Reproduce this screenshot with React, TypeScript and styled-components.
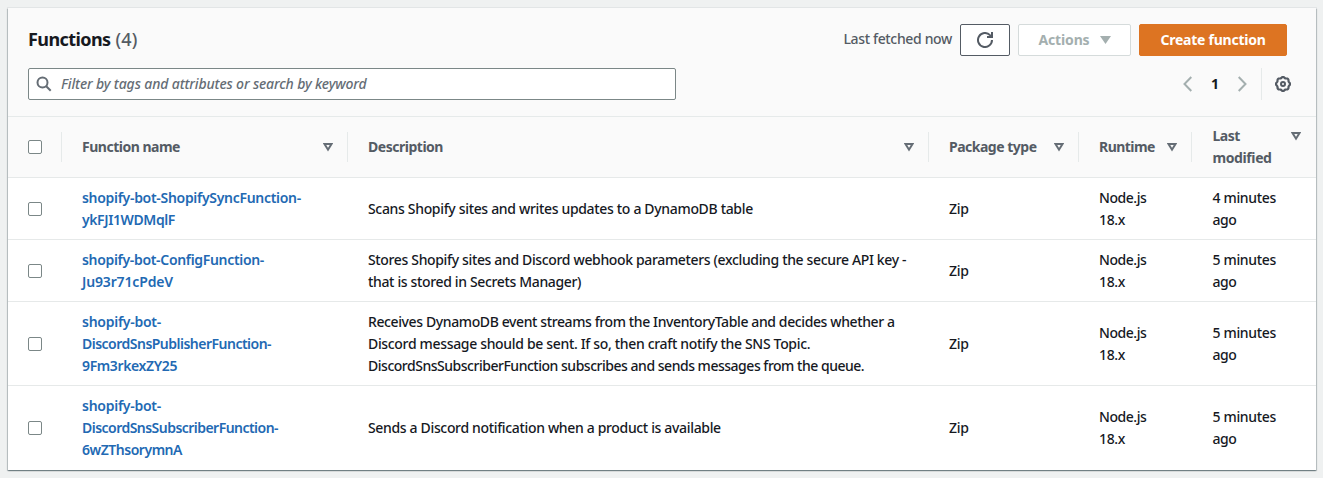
import React from "react";
import styled, { createGlobalStyle } from "styled-components";

const GlobalStyle = createGlobalStyle`
  *, *::before, *::after { box-sizing: border-box; }
  body {
    margin: 0;
    background: #eff1f1;
    color: #16191f;
    font-family: "Noto Sans", "Open Sans", sans-serif;
    font-size: 14px;
    line-height: 22px;
  }
`;

const Page = styled.main`
  height: 478px;
  padding: 8px 7px 8px 8px;
  overflow: hidden;
`;

const Panel = styled.section`
  height: 462px;
  background: #fff;
  box-shadow: 0 0 0 1px rgba(0, 28, 36, 0.05), 0 1px 1px 0 rgba(0, 28, 36, 0.3), 1px 1px 1px 0 rgba(0, 28, 36, 0.15),
    -1px 1px 1px 0 rgba(0, 28, 36, 0.15);
`;

const PanelHeader = styled.header`
  height: 109px;
  padding: 16px 20px 0;
  background: #fafafa;
  border-bottom: 1px solid #e6eaea;
`;

const HeaderRow = styled.div`
  display: flex;
  align-items: center;
  justify-content: space-between;
  height: 32px;
  margin-bottom: 12px;
`;

const Text = styled.span<{ $spacing?: number }>`
  display: block;
  white-space: nowrap;
  letter-spacing: ${(p) => p.$spacing ?? -0.23}px;
`;

const Title = styled.h2`
  display: flex;
  gap: 5px;
  margin: 0 0 2px;
  font-size: 18px;
  font-weight: 700;
`;

const Counter = styled.span`
  color: #545b64;
  font-weight: 500;
  letter-spacing: 0.1px;
`;

const Actions = styled.div`
  display: flex;
  align-items: center;
  gap: 8px;
  margin-right: 9px;
`;

const FetchedNote = styled.div`
  margin-bottom: 2px;
  color: #545b64;
  font-weight: 500;
`;

const Button = styled.button<{ $variant?: "normal" | "disabled" | "primary"; $width: number }>`
  display: flex;
  align-items: center;
  justify-content: center;
  gap: 10px;
  width: ${(p) => p.$width}px;
  height: 32px;
  padding: 0;
  border: 1px solid
    ${(p) => (p.$variant === "primary" ? "#dd7422" : p.$variant === "disabled" ? "#d5dbdb" : "#545b64")};
  border-radius: 2px;
  background: ${(p) => (p.$variant === "primary" ? "#dd7422" : "#fff")};
  color: ${(p) => (p.$variant === "primary" ? "#fff" : p.$variant === "disabled" ? "#a4afaf" : "#545b64")};
  font: 700 14px/22px "Noto Sans", sans-serif;
`;

const SearchField = styled.div`
  display: flex;
  align-items: center;
  gap: 9px;
  width: 648px;
  height: 32px;
  padding: 0 7px;
  border: 1px solid #7b8787;
  border-radius: 2px;
  background: #fff;
  color: #656d75;
  font-style: italic;
  font-weight: 500;
`;

const Pagination = styled.nav`
  display: flex;
  align-items: center;
  height: 32px;
  margin-right: 5px;
  color: #a4afaf;
`;

const PageNumber = styled.span`
  width: 46px;
  color: #16191f;
  font-weight: 700;
  text-align: center;
`;

const Preferences = styled.div`
  display: flex;
  align-items: center;
  height: 32px;
  margin-left: 14px;
  padding-left: 13px;
  border-left: 1px solid #e6eaea;
  color: #545b64;
`;

const Row = styled.div<{ $head?: boolean }>`
  display: grid;
  grid-template-columns: 54px 286px 581px 150px 113px 124px;
  align-items: center;
  padding: ${(p) => (p.$head ? 8 : 9)}px 0 8px;
  border-bottom: 1px solid #e6e9e9;
  background: ${(p) => (p.$head ? "#fafafa" : "#fff")};
  color: ${(p) => (p.$head ? "#545b64" : "#16191f")};
  font-weight: ${(p) => (p.$head ? 700 : 500)};

  &:last-child {
    border-bottom-color: transparent;
  }
`;

const Cell = styled.div`
  padding-left: 20px;

  &:last-child {
    padding-left: 20.5px;
  }
`;

const HeadCell = styled.div<{ $last?: boolean }>`
  display: flex;
  align-items: center;
  justify-content: space-between;
  min-height: 30px;
  padding: ${(p) => (p.$last ? "0 15px 0 20.5px" : "0 14px 0 20px")};
  border-right: ${(p) => (p.$last ? "0" : "1px solid #e6eaea")};

  & > svg {
    align-self: ${(p) => (p.$last ? "flex-start" : "center")};
    margin-top: ${(p) => (p.$last ? 7 : 1)}px;
  }
`;

const FunctionLink = styled.a`
  color: #2269b3;
  font-weight: 600;
`;

const Checkbox = styled.input.attrs({ type: "checkbox" })`
  appearance: none;
  display: block;
  width: 14px;
  height: 14px;
  margin: 0;
  border: 1px solid #7b8787;
  border-radius: 2px;
  background: #fff;
`;

const SortIcon = () => (
  <svg width="10" height="9" viewBox="0 0 10 9" fill="none" stroke="#656d75" strokeWidth="2">
    <path d="M1.5 1h7L5 6.700z" />
  </svg>
);

const SearchIcon = () => (
  <svg width="16" height="16" viewBox="0 0 16 16" fill="none" stroke="#656d75" strokeWidth="2">
    <circle cx="6.500" cy="6.500" r="5" />
    <path d="m10 10 4.700 4.700" />
  </svg>
);

const RefreshIcon = () => (
  <svg width="16" height="16" viewBox="0 0 16 16" fill="none" stroke="currentColor" strokeWidth="2">
    <path d="M15 8a7 7 0 1 1-2-4.900L15 5" />
    <path d="M10 5h5V0" />
  </svg>
);

const ChevronIcon = ({ d }: { d: string }) => (
  <svg width="9" height="16" viewBox="0 0 9 16" fill="none" stroke="currentColor" strokeWidth="2">
    <path d={d} />
  </svg>
);

const gearPath = Array.from({ length: 64 }, (_, i) => {
  const a = (i / 64) * Math.PI * 2;
  const r = 6.6 + 0.5 * Math.cos(8 * a);
  return `${i ? "L" : "M"}${(8 + r * Math.cos(a)).toFixed(2)} ${(8 + r * Math.sin(a)).toFixed(2)}`;
}).join("");

const GearIcon = () => (
  <svg width="16" height="16" viewBox="0 0 16 16" fill="none" stroke="currentColor" strokeWidth="2.2">
    <path d={`${gearPath}Z`} />
    <circle cx="8" cy="8" r="2" strokeWidth="2" />
  </svg>
);

type Line = [text: string, spacing?: number];

const columns: Line[][] = [
  [["Function name", -0.49]],
  [["Description", -0.48]],
  [["Package type", -0.5]],
  [["Runtime", -0.55]],
  [["Last", -0.5], ["modified", -0.4]],
];

const functions: { name: Line[]; description: Line[]; modified: string }[] = [
  {
    name: [["shopify-bot-ShopifySyncFunction-", -0.3], ["ykFJI1WDMqlF", -0.4]],
    description: [["Scans Shopify sites and writes updates to a DynamoDB table", -0.33]],
    modified: "4 minutes",
  },
  {
    name: [["shopify-bot-ConfigFunction-", -0.32], ["Ju93r71cPdeV", -0.15]],
    description: [
      ["Stores Shopify sites and Discord webhook parameters (excluding the secure API key -", -0.35],
      ["that is stored in Secrets Manager)", -0.35],
    ],
    modified: "5 minutes",
  },
  {
    name: [["shopify-bot-", -0.26], ["DiscordSnsPublisherFunction-", -0.51], ["9Fm3rkexZY25", -0.38]],
    description: [
      ["Receives DynamoDB event streams from the InventoryTable and decides whether a", -0.39],
      ["Discord message should be sent. If so, then craft notify the SNS Topic.", -0.33],
      ["DiscordSnsSubscriberFunction subscribes and sends messages from the queue.", -0.48],
    ],
    modified: "5 minutes",
  },
  {
    name: [["shopify-bot-", -0.26], ["DiscordSnsSubscriberFunction-", -0.53], ["6wZThsorymnA", -0.47]],
    description: [["Sends a Discord notification when a product is available", -0.34]],
    modified: "5 minutes",
  },
];

const Lines = ({ lines }: { lines: Line[] }) => (
  <div>
    {lines.map(([text, spacing]) => (
      <Text key={text} $spacing={spacing}>
        {text}
      </Text>
    ))}
  </div>
);

export default function App() {
  return (
    <Page>
      <GlobalStyle />
      <Panel>
        <PanelHeader>
          <HeaderRow>
            <Title>
              <Text $spacing={-0.58}>Functions</Text>
              <Counter>(4)</Counter>
            </Title>
            <Actions>
              <FetchedNote>
                <Text $spacing={-0.34}>Last fetched now</Text>
              </FetchedNote>
              <Button $width={50} aria-label="Refresh">
                <RefreshIcon />
              </Button>
              <Button $width={113} $variant="disabled">
                <Text $spacing={-0.15}>Actions</Text>
                <svg width="11" height="8" viewBox="0 0 11 8">
                  <path d="M0 0h11L5.500 8z" fill="currentColor" />
                </svg>
              </Button>
              <Button $width={148} $variant="primary">
                <Text $spacing={-0.25}>Create function</Text>
              </Button>
            </Actions>
          </HeaderRow>
          <HeaderRow>
            <SearchField>
              <SearchIcon />
              <Text $spacing={-0.14}>Filter by tags and attributes or search by keyword</Text>
            </SearchField>
            <Pagination>
              <ChevronIcon d="M8.300 1 1.500 8l6.800 7" />
              <PageNumber>1</PageNumber>
              <ChevronIcon d="M.7 1l6.800 7-6.800 7" />
              <Preferences>
                <GearIcon />
              </Preferences>
            </Pagination>
          </HeaderRow>
        </PanelHeader>
        <Row $head>
          <HeadCell>
            <Checkbox aria-label="Select all" />
          </HeadCell>
          {columns.map((lines, i) => (
            <HeadCell key={lines[0][0]} $last={i === columns.length - 1}>
              <Lines lines={lines} />
              <SortIcon />
            </HeadCell>
          ))}
        </Row>
        {functions.map((fn) => (
          <Row key={fn.name.map((l) => l[0]).join("")}>
            <Cell>
              <Checkbox />
            </Cell>
            <Cell>
              <FunctionLink>
                <Lines lines={fn.name} />
              </FunctionLink>
            </Cell>
            <Cell>
              <Lines lines={fn.description} />
            </Cell>
            <Cell>
              <Text>Zip</Text>
            </Cell>
            <Cell>
              <Lines lines={[["Node.js", -0.45], ["18.x", -0.35]]} />
            </Cell>
            <Cell>
              <Lines lines={[[fn.modified, -0.34], ["ago", -0.5]]} />
            </Cell>
          </Row>
        ))}
      </Panel>
    </Page>
  );
}
